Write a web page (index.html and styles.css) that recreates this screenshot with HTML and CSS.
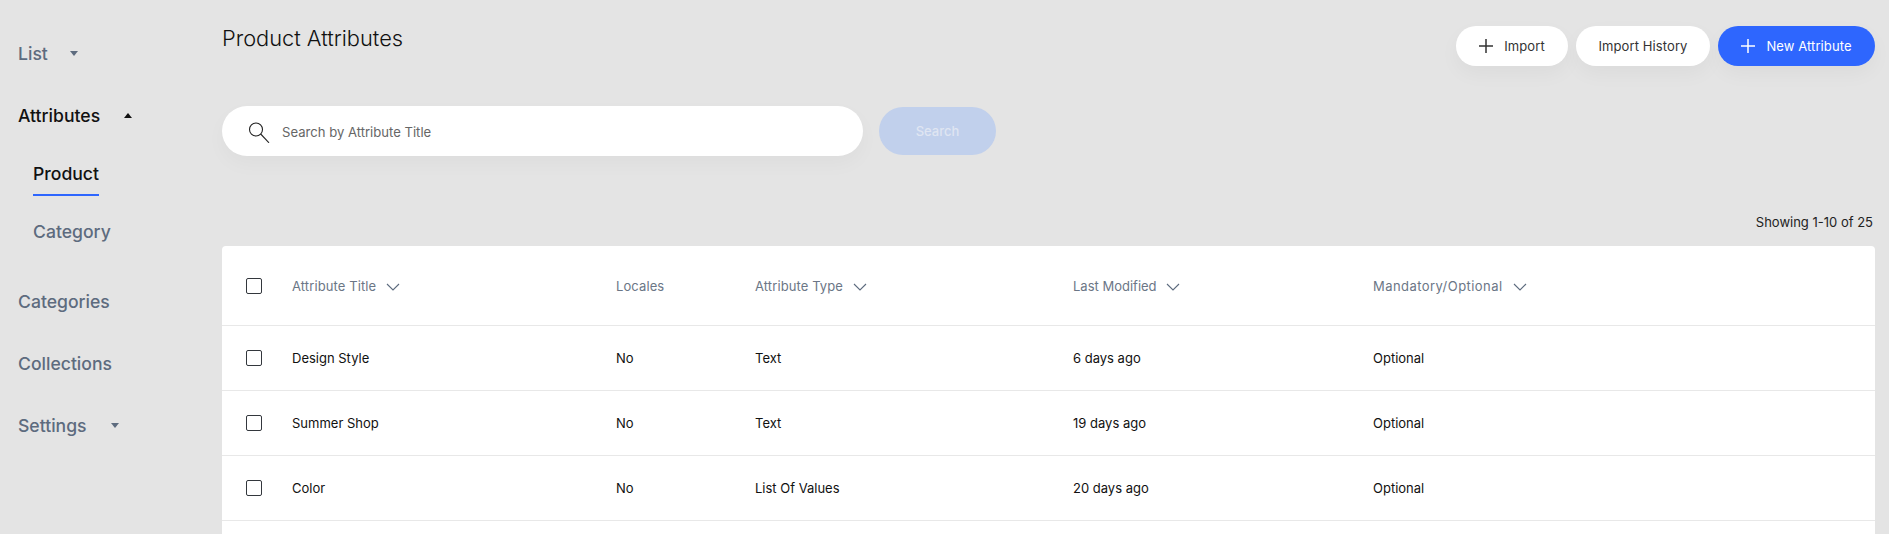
FILE: index.html
```html
<!DOCTYPE html>
<html lang="en">
<head>
<meta charset="utf-8">
<title>Product Attributes</title>
<link rel="stylesheet" href="styles.css">
</head>
<body>
<div class="app">
  <nav class="side">
    <a class="nav-item muted nav-list">List <svg class="caret caret-list" viewBox="0 0 8 5"><path d="M0 0h8L4 5z"/></svg></a>
    <a class="nav-item active nav-attr">Attributes <svg class="caret caret-attr" viewBox="0 0 8 5"><path d="M0 5h8L4 0z"/></svg></a>
    <div class="sub">
      <a class="sub-item current">Product</a>
      <a class="sub-item muted">Category</a>
    </div>
    <a class="nav-item muted">Categories</a>
    <a class="nav-item muted">Collections</a>
    <a class="nav-item muted">Settings <svg class="caret caret-set" viewBox="0 0 8 5"><path d="M0 0h8L4 5z"/></svg></a>
  </nav>
  <main class="main">
    <header class="top">
      <h1 class="title">Product Attributes</h1>
      <div class="actions">
        <button class="btn btn-import"><svg class="plus" viewBox="0 0 14 14"><path d="M7 0v14M0 7h14"/></svg>Import</button>
        <button class="btn btn-history">Import History</button>
        <button class="btn btn-new"><svg class="plus" viewBox="0 0 14 14"><path d="M7 0v14M0 7h14"/></svg>New Attribute</button>
      </div>
    </header>
    <div class="search-row">
      <label class="search">
        <svg class="mag" viewBox="0 0 22 24"><circle cx="8" cy="10.5" r="6.5"/><path d="M12.7 15l8.3 8.8"/></svg>
        <span class="placeholder">Search by Attribute Title</span>
      </label>
      <button class="search-btn">Search</button>
    </div>
    <p class="count">Showing 1-10 of 25</p>
    <section class="card">
      <table class="tbl">
        <thead>
          <tr>
            <th class="c-check"><span class="check"></span></th>
            <th class="c-title">Attribute Title <svg class="chev" viewBox="0 0 14 8"><path d="M1 1l6 6 6-6"/></svg></th>
            <th class="c-loc">Locales</th>
            <th class="c-type">Attribute Type <svg class="chev" viewBox="0 0 14 8"><path d="M1 1l6 6 6-6"/></svg></th>
            <th class="c-mod">Last Modified <svg class="chev" viewBox="0 0 14 8"><path d="M1 1l6 6 6-6"/></svg></th>
            <th class="c-man">Mandatory/Optional <svg class="chev" viewBox="0 0 14 8"><path d="M1 1l6 6 6-6"/></svg></th>
          </tr>
        </thead>
        <tbody>
          <tr><td><span class="check"></span></td><td>Design Style</td><td>No</td><td>Text</td><td>6 days ago</td><td>Optional</td></tr>
          <tr><td><span class="check"></span></td><td>Summer Shop</td><td>No</td><td>Text</td><td>19 days ago</td><td>Optional</td></tr>
          <tr><td><span class="check"></span></td><td>Color</td><td>No</td><td>List Of Values</td><td>20 days ago</td><td>Optional</td></tr>
        </tbody>
      </table>
    </section>
  </main>
</div>
</body>
</html>
```
FILE: styles.css
```css
* { box-sizing: border-box; }
html, body { margin: 0; height: 534px; overflow: hidden; }
body { background: #e4e4e4; font-family: "Inter", "Noto Sans", sans-serif; color: #111; }
.app { display: flex; height: 534px; }
.side { width: 222px; flex: none; padding: 39px 0 0 18px; display: flex; flex-direction: column; }
.nav-item { display: flex; align-items: center; height: 28px; margin-bottom: 34px; font-size: 17.6px; font-weight: 500; white-space: pre; }
.muted { color: #5d6b7e; }
.active { color: #111; }
.caret { width: 8px; height: 5px; fill: currentColor; }
.caret-list { margin-left: 17px; }
.caret-attr { margin-left: 19px; }
.caret-set { margin-left: 20px; }
.sub { display: flex; flex-direction: column; align-items: flex-start; padding-left: 15px; margin-top: -3px; margin-bottom: 41px; }
.sub-item { font-size: 17.6px; font-weight: 500; line-height: 28px; height: 28px; }
.sub-item.current { border-bottom: 2px solid #2e66fe; height: 36px; margin-bottom: 22px; }
.main { flex: 1; padding-right: 14px; display: flex; flex-direction: column; min-width: 0; }
.top { display: flex; justify-content: space-between; align-items: flex-start; padding-top: 26px; height: 106px; }
.title { margin: 0; font-size: 21.8px; line-height: 24px; font-weight: 300; }
.actions { display: flex; gap: 8px; }
.btn { height: 40px; border: 0; border-radius: 20px; background: #fff; color: #333; font: 400 13px "Inter", sans-serif; letter-spacing: .1px; display: flex; align-items: center; justify-content: center; box-shadow: 0 8px 20px rgba(0,0,0,.04); padding: 0; }
.btn-import { width: 112px; }
.btn-history { width: 134px; }
.btn-new { width: 157px; background: #2e66fe; color: #fff; }
.plus { width: 14px; height: 14px; margin-right: 11px; fill: none; stroke: currentColor; stroke-width: 1.5; }
.search-row { display: flex; align-items: center; gap: 16px; }
.search { width: 641px; height: 50px; border-radius: 25px; background: #fff; display: flex; align-items: center; padding-left: 26px; box-shadow: 0 8px 20px rgba(0,0,0,.03); }
.mag { width: 22px; height: 24px; margin-right: 12px; fill: none; stroke: #222; stroke-width: 1.1; }
.placeholder { font-size: 13.1px; color: #666; padding-top: 1px; }
.search-btn { width: 117px; height: 48px; border: 0; border-radius: 24px; background: #c1d0ec; color: #dfe5f2; font: 500 13px "Inter", sans-serif; padding: 0; }
.count { margin: 58px 2px 0 0; height: 32px; line-height: 16px; text-align: right; font-size: 13px; color: #222; }
.card { flex: 1; background: #fff; border-radius: 4px 4px 0 0; }
.tbl { width: 100%; border-collapse: collapse; table-layout: fixed; font-size: 13px; }
.tbl th { height: 79px; font-weight: 400; color: #6b7686; text-align: left; padding: 1px 0 0; border-bottom: 1px solid #e8e8e8; white-space: nowrap; letter-spacing: .1px; }
.tbl td { height: 65px; padding: 1px 0 0; color: #111; border-bottom: 1px solid #e8e8e8; }
.c-check { width: 70px; }
.c-title { width: 324px; }
.c-loc { width: 139px; }
.c-type { width: 318px; }
.c-mod { width: 300px; }
.tbl .c-mod { letter-spacing: 0; }
.tbl .c-man { letter-spacing: .45px; }
.tbl th:first-child, .tbl td:first-child { padding-left: 24px; }
.check { display: block; width: 16px; height: 16px; border: 1px solid #33373d; border-radius: 2px; }
.chev { width: 14px; height: 8px; margin-left: 6px; fill: none; stroke: #5d6b7e; stroke-width: 1.1; }
```
